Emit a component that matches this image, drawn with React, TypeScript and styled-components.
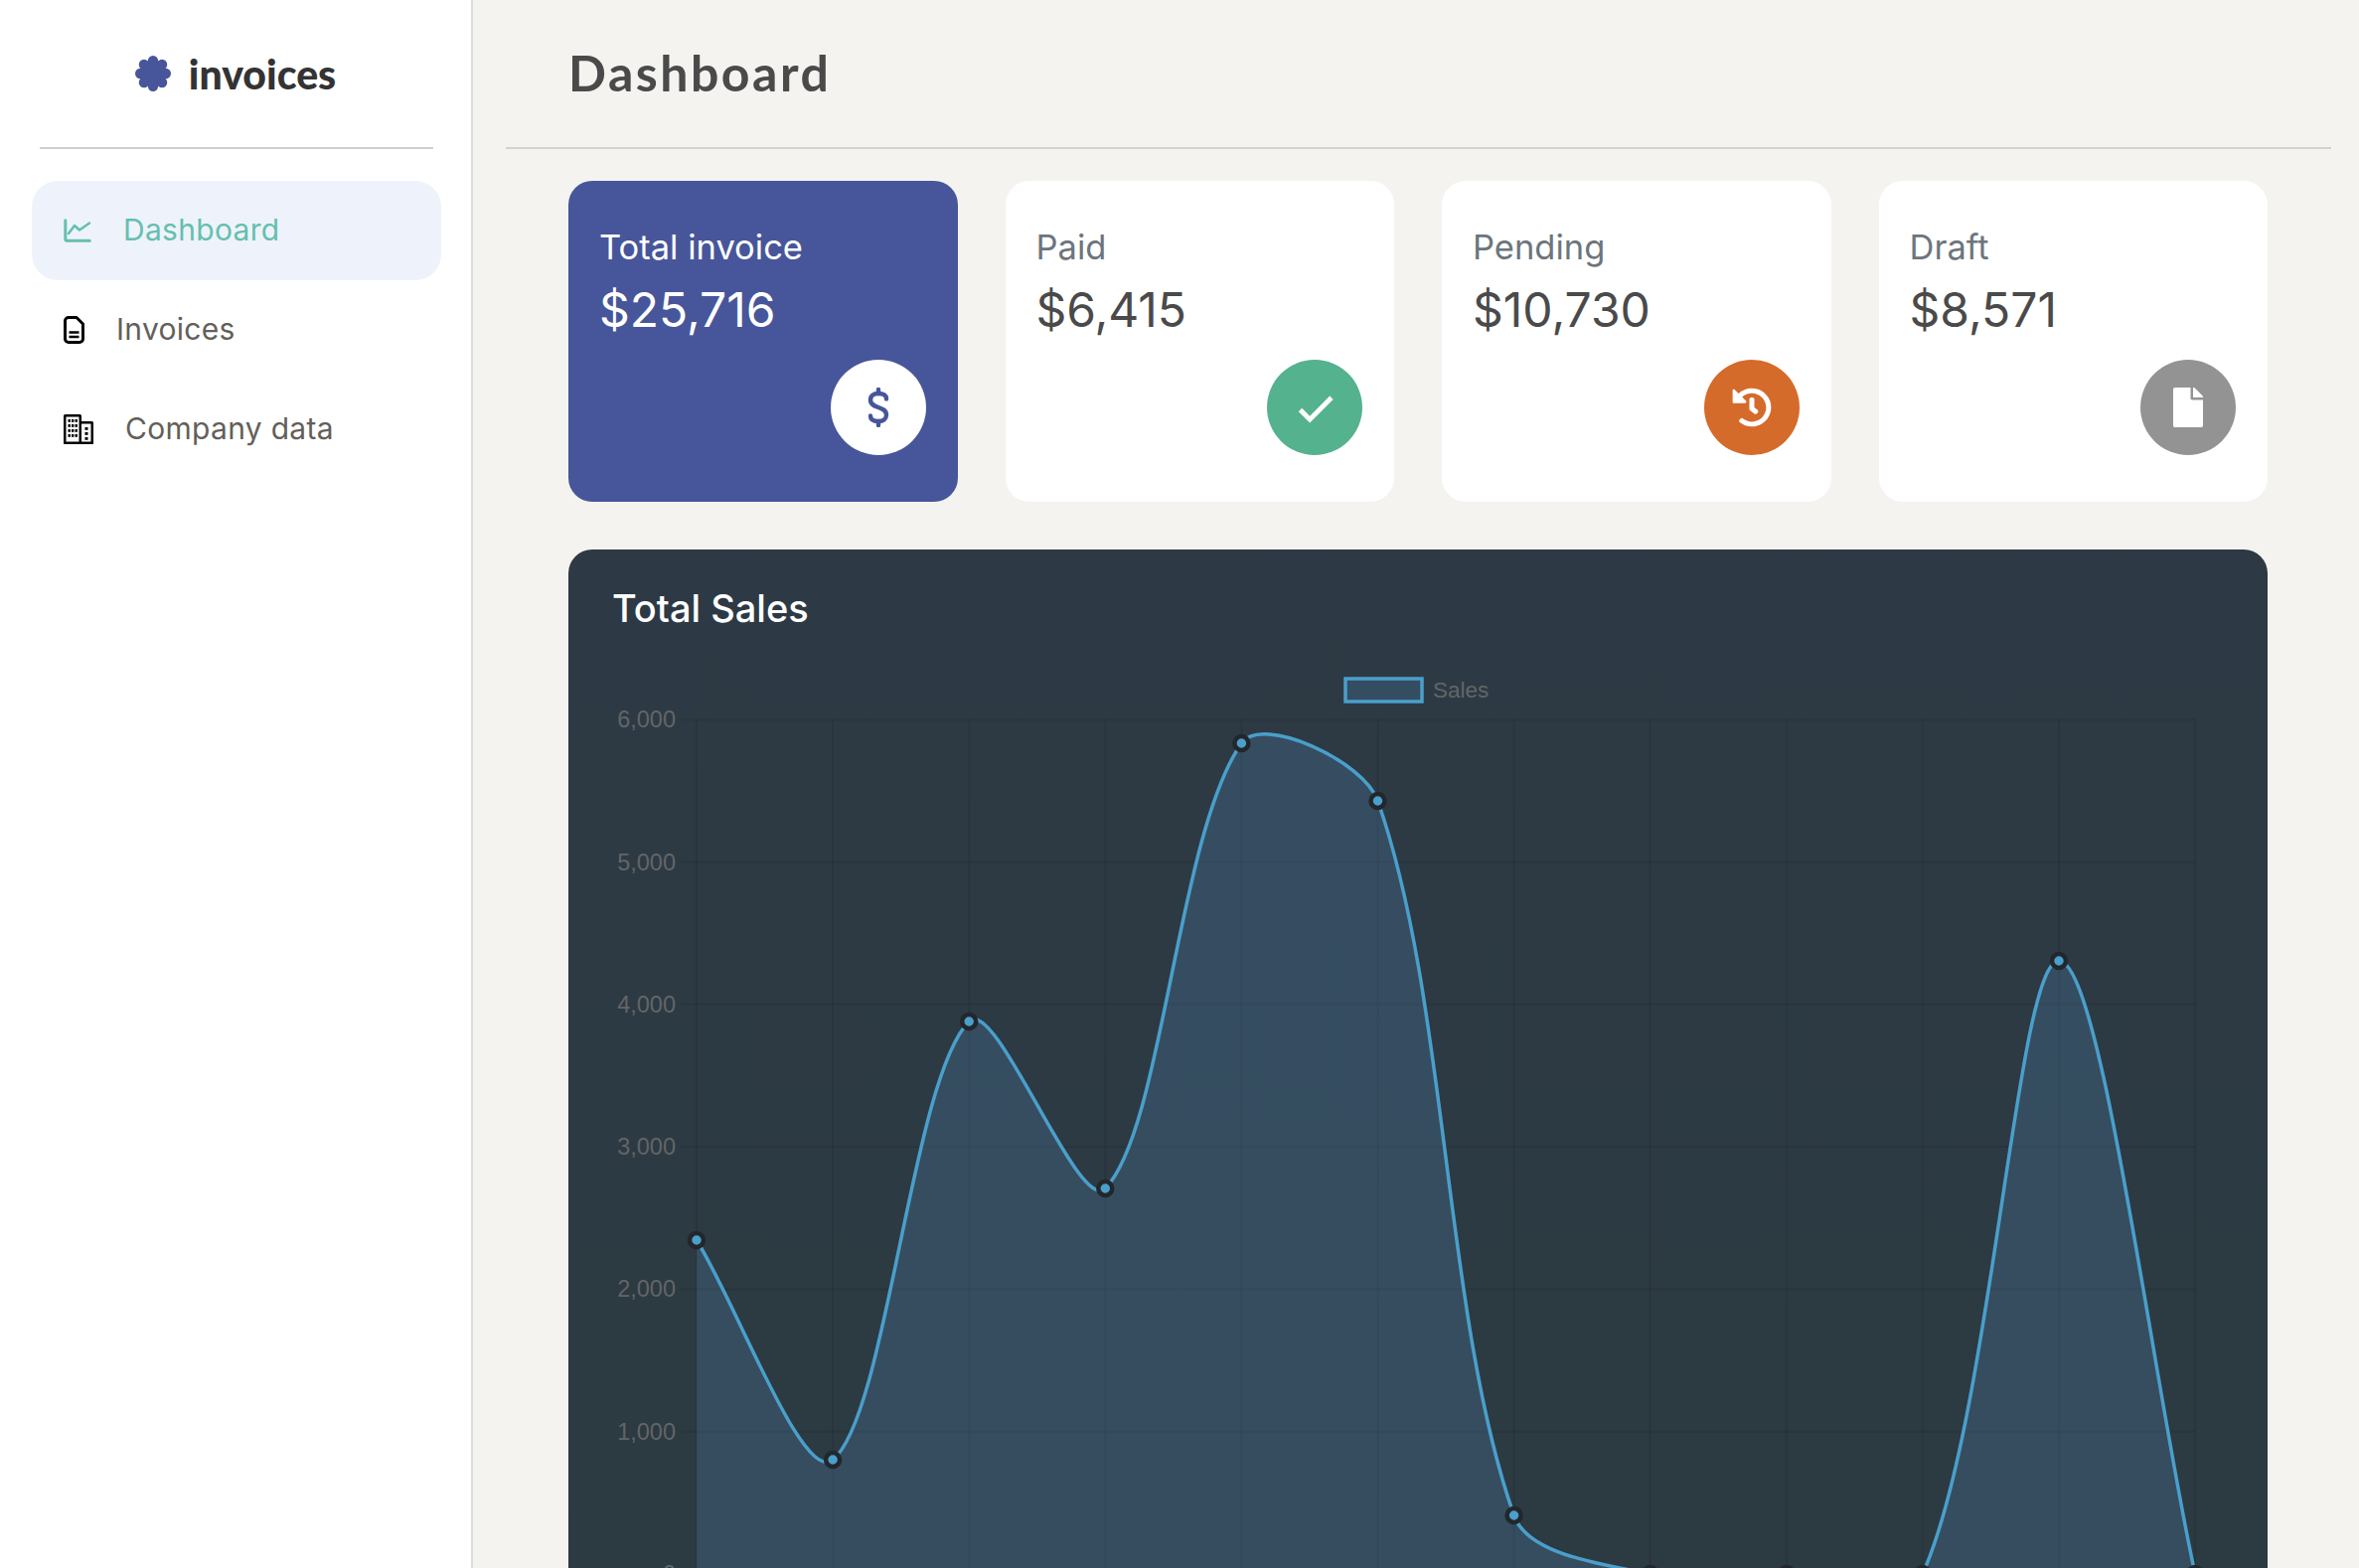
import React from "react";
import styled, { createGlobalStyle } from "styled-components";
import { BiCheck } from "react-icons/bi";
import { FaHistory, FaFile } from "react-icons/fa";

const GlobalStyle = createGlobalStyle`
  html, body {
    margin: 0;
    height: 100%;
    overflow: hidden;
    background: #f4f3ef;
    font-family: "Inter", "Liberation Sans", sans-serif;
  }
`;

const Layout = styled.div`
  display: flex;
  height: 100vh;
  overflow: hidden;
`;

const Sidebar = styled.aside`
  width: 474px;
  flex-shrink: 0;
  background: #fff;
  border-right: 2px solid #dddddd;
`;

const Brand = styled.div`
  height: 148px;
  display: flex;
  align-items: center;
  justify-content: center;
  gap: 18px;
  font-family: "Lato", sans-serif;
  font-weight: 900;
  font-size: 41px;
  color: #333;
  box-sizing: border-box;
`;

const SideDivider = styled.hr`
  margin: 0 38px 0 40px;
  border: 0;
  border-top: 2px solid #cfcfcf;
`;

const Nav = styled.nav`
  padding: 32px 30px 0 32px;
`;

const NavItem = styled.div<{ $active?: boolean }>`
  height: 100px;
  display: flex;
  align-items: center;
  padding-left: 32px;
  gap: 32px;
  border-radius: 26px;
  font-size: 30px;
  letter-spacing: 0.3px;
  background: ${(p) => (p.$active ? "#eef3fb" : "transparent")};
  color: ${(p) => (p.$active ? "#66bfae" : "#635f5a")};
  svg {
    flex-shrink: 0;
  }
`;

const NavLabel = styled.span`
  position: relative;
  top: -1px;
`;

const Main = styled.main`
  flex: 1;
  min-width: 0;
`;

const Topbar = styled.header`
  height: 150px;
  margin: 0 28px 0 33px;
  padding: 0 0 2px 63px;
  display: flex;
  align-items: center;
  border-bottom: 2px solid #d3d3d0;
  box-sizing: border-box;
`;

const PageTitle = styled.h1`
  margin: 0;
  font-family: "Lato", sans-serif;
  font-weight: 700;
  font-size: 50px;
  letter-spacing: 2.5px;
  color: #4a4a4a;
`;

const Content = styled.div`
  padding: 32px 92px 0 96px;
`;

const Cards = styled.div`
  display: grid;
  grid-template-columns: repeat(4, 1fr);
  gap: 48px;
`;

const Card = styled.div<{ $primary?: boolean }>`
  height: 323px;
  box-sizing: border-box;
  padding: 46px 32px 0 31px;
  border-radius: 24px;
  background: ${(p) => (p.$primary ? "#47569a" : "#fff")};
  display: flex;
  flex-direction: column;
`;

const CardLabel = styled.div<{ $primary?: boolean }>`
  font-size: 34.5px;
  line-height: 42px;
  color: ${(p) => (p.$primary ? "#fff" : "#6c757d")};
`;

const CardValue = styled.div<{ $primary?: boolean }>`
  margin-top: 12px;
  font-size: 48px;
  line-height: 60px;
  color: ${(p) => (p.$primary ? "#fff" : "#4a4a4a")};
`;

const CardIcon = styled.div<{ $bg: string; $fg: string }>`
  width: 96px;
  height: 96px;
  margin-top: 20px;
  align-self: flex-end;
  border-radius: 50%;
  background: ${(p) => p.$bg};
  color: ${(p) => p.$fg};
  display: flex;
  align-items: center;
  justify-content: center;
`;

const Panel = styled.section`
  margin-top: 48px;
  border-radius: 24px 24px 0 0;
  background: linear-gradient(#2d3a45, #2c3a41);
`;

const PanelTitle = styled.h2`
  margin: 0;
  height: 96px;
  padding: 38px 0 0 44px;
  box-sizing: border-box;
  font-weight: 500;
  font-size: 38px;
  line-height: 42px;
  color: #fff;
`;

const ChartSvg = styled.svg`
  display: block;
  width: 100%;
  height: 1000px;
  text {
    font-family: "Liberation Sans", sans-serif;
    font-size: 23.5px;
    fill: #636567;
  }
`;

const LogoMark = () => (
  <svg width="36" height="36" viewBox="0 0 36 36" fill="#47569a">
    <circle cx="18" cy="18" r="13.5" />
    {[0, 45, 90, 135, 180, 225, 270, 315].map((a) => (
      <circle
        key={a}
        cx={18 + 12.8 * Math.sin((a * Math.PI) / 180)}
        cy={18 - 12.8 * Math.cos((a * Math.PI) / 180)}
        r="5.2"
      />
    ))}
  </svg>
);

const ChartLineIcon = () => (
  <svg width="28" height="24" viewBox="0 0 28 24" fill="none" stroke="#66bfae" strokeWidth="3" strokeLinecap="round" strokeLinejoin="round">
    <path d="M1.8 1.8V20.5a1.7 1.7 0 0 0 1.7 1.7H26.3" />
    <path d="M5 15L11 7L16 11.5L26 4.5" strokeWidth="2.6" />
  </svg>
);

const FileIcon = () => (
  <svg width="21" height="28" viewBox="0 0 21 28" fill="none" stroke="#000" strokeWidth="3" strokeLinejoin="round">
    <path d="M5 1.5H13L19.5 8V23a3.5 3.5 0 0 1-3.5 3.5H5A3.5 3.5 0 0 1 1.5 23V5A3.5 3.5 0 0 1 5 1.5Z" />
    <path d="M5.5 16.5H15.5M5.5 21H15.5" strokeWidth="2.4" />
  </svg>
);

const BuildingsIcon = () => (
  <svg width="30" height="30" viewBox="0 0 30 30" fill="#000">
    <path d="M0 29.5V1.5A1.5 1.5 0 0 1 1.5 0H16.5A1.5 1.5 0 0 1 18 1.5V7H28.5A1.5 1.5 0 0 1 30 8.5V30H0ZM2.5 27.5H15.5V2.5H2.5ZM18 27.5H27.5V9.5H18Z" fillRule="evenodd" />
    {[5, 10, 15, 20].flatMap((y) =>
      [4.5, 8, 11.5].map((x) => <rect key={`${x}-${y}`} x={x} y={y} width="2.4" height="2.8" />)
    )}
    {[13, 18, 23].map((y) => (
      <rect key={y} x="21.5" y={y} width="3" height="2.8" />
    ))}
  </svg>
);

const DollarIcon = () => (
  <svg width="24" height="40" viewBox="0 0 24 40" fill="none" stroke="currentColor" strokeWidth="4.4" strokeLinecap="round">
    <path d="M12 2V6M12 34V38" />
    <path d="M20 11.5C20 8 17 6 12 6C7 6 4 8.5 4 12.5C4 17 8 18.5 12 20C16 21.5 20 23 20 27.5C20 31.5 17 34 12 34C7 34 4 32 4 28.5" />
  </svg>
);

const X0 = 701;
const XSTEP = 137.1;
const Y0 = 1585;
const YTOP = 725;
const YSTEP = 143.3;
const XEND = X0 + XSTEP * 11;

const sales = [1249, 1470, 1029, 1197, 749, 807, 1526, 1585, 1585, 1585, 968, 1585];
const points = sales.map((y, i) => ({ x: X0 + XSTEP * i, y }));

// same spline chart.js draws
function buildLine(pts: { x: number; y: number }[], t = 0.31) {
  const ctrl = pts.map((p, i) => {
    const prev = pts[i - 1] ?? p;
    const next = pts[i + 1] ?? p;
    const d01 = Math.hypot(p.x - prev.x, p.y - prev.y);
    const d12 = Math.hypot(next.x - p.x, next.y - p.y);
    const total = d01 + d12 || 1;
    const fa = (t * d01) / total;
    const fb = (t * d12) / total;
    return {
      px: p.x - fa * (next.x - prev.x),
      py: Math.min(p.y - fa * (next.y - prev.y), Y0),
      nx: p.x + fb * (next.x - prev.x),
      ny: Math.min(p.y + fb * (next.y - prev.y), Y0),
    };
  });
  let d = `M${pts[0].x} ${pts[0].y}`;
  for (let i = 1; i < pts.length; i++) {
    d += ` C${ctrl[i - 1].nx} ${ctrl[i - 1].ny} ${ctrl[i].px} ${ctrl[i].py} ${pts[i].x} ${pts[i].y}`;
  }
  return d;
}

const linePath = buildLine(points);
const areaPath = `${linePath} L${XEND} ${Y0} L${X0} ${Y0} Z`;

const SalesChart = () => (
  <ChartSvg viewBox="572 650 1710 1000" preserveAspectRatio="xMinYMin meet">
    {[0, 1, 2, 3, 4, 5, 6].map((n) => {
      const y = Y0 - n * YSTEP;
      return (
        <g key={n}>
          <line x1={685} x2={XEND} y1={y} y2={y} stroke="rgba(0,0,0,0.08)" strokeWidth={2} />
          <text x={680} y={y + 8} textAnchor="end">
            {n === 0 ? "0" : `${n},000`}
          </text>
        </g>
      );
    })}
    {points.map((p) => (
      <line key={p.x} x1={p.x} x2={p.x} y1={YTOP} y2={1600} stroke="rgba(0,0,0,0.08)" strokeWidth={2} />
    ))}
    <path d={areaPath} fill="rgba(89,153,216,0.2)" />
    <path d={linePath} fill="none" stroke="#4a9fcb" strokeWidth={3.5} />
    {points.map((p) => (
      <circle key={p.x} cx={p.x} cy={p.y} r={7} fill="#4a9fcb" stroke="#23272b" strokeWidth={4.5} />
    ))}
    <rect x={1354} y={684} width={77} height={23} fill="#354d60" stroke="#4a9fcb" strokeWidth={3.5} />
    <text x={1442} y={703} style={{ fontSize: 22.5 }}>
      Sales
    </text>
  </ChartSvg>
);

const cards = [
  { label: "Total invoice", value: "$25,716", bg: "#fff", fg: "#47569a", icon: <DollarIcon />, primary: true },
  { label: "Paid", value: "$6,415", bg: "#55b28e", fg: "#fff", icon: <BiCheck size={58} /> },
  { label: "Pending", value: "$10,730", bg: "#d56b2a", fg: "#fff", icon: <FaHistory size={40} /> },
  { label: "Draft", value: "$8,571", bg: "#939393", fg: "#fff", icon: <FaFile size={40} /> },
];

export default function App() {
  return (
    <Layout>
      <GlobalStyle />
      <Sidebar>
        <Brand>
          <LogoMark />
          invoices
        </Brand>
        <SideDivider />
        <Nav>
          <NavItem $active>
            <ChartLineIcon />
            <NavLabel>Dashboard</NavLabel>
          </NavItem>
          <NavItem>
            <FileIcon />
            <NavLabel>Invoices</NavLabel>
          </NavItem>
          <NavItem>
            <BuildingsIcon />
            <NavLabel>Company data</NavLabel>
          </NavItem>
        </Nav>
      </Sidebar>
      <Main>
        <Topbar>
          <PageTitle>Dashboard</PageTitle>
        </Topbar>
        <Content>
          <Cards>
            {cards.map((c) => (
              <Card key={c.label} $primary={c.primary}>
                <CardLabel $primary={c.primary}>{c.label}</CardLabel>
                <CardValue $primary={c.primary}>{c.value}</CardValue>
                <CardIcon $bg={c.bg} $fg={c.fg}>
                  {c.icon}
                </CardIcon>
              </Card>
            ))}
          </Cards>
          <Panel>
            <PanelTitle>Total Sales</PanelTitle>
            <SalesChart />
          </Panel>
        </Content>
      </Main>
    </Layout>
  );
}
